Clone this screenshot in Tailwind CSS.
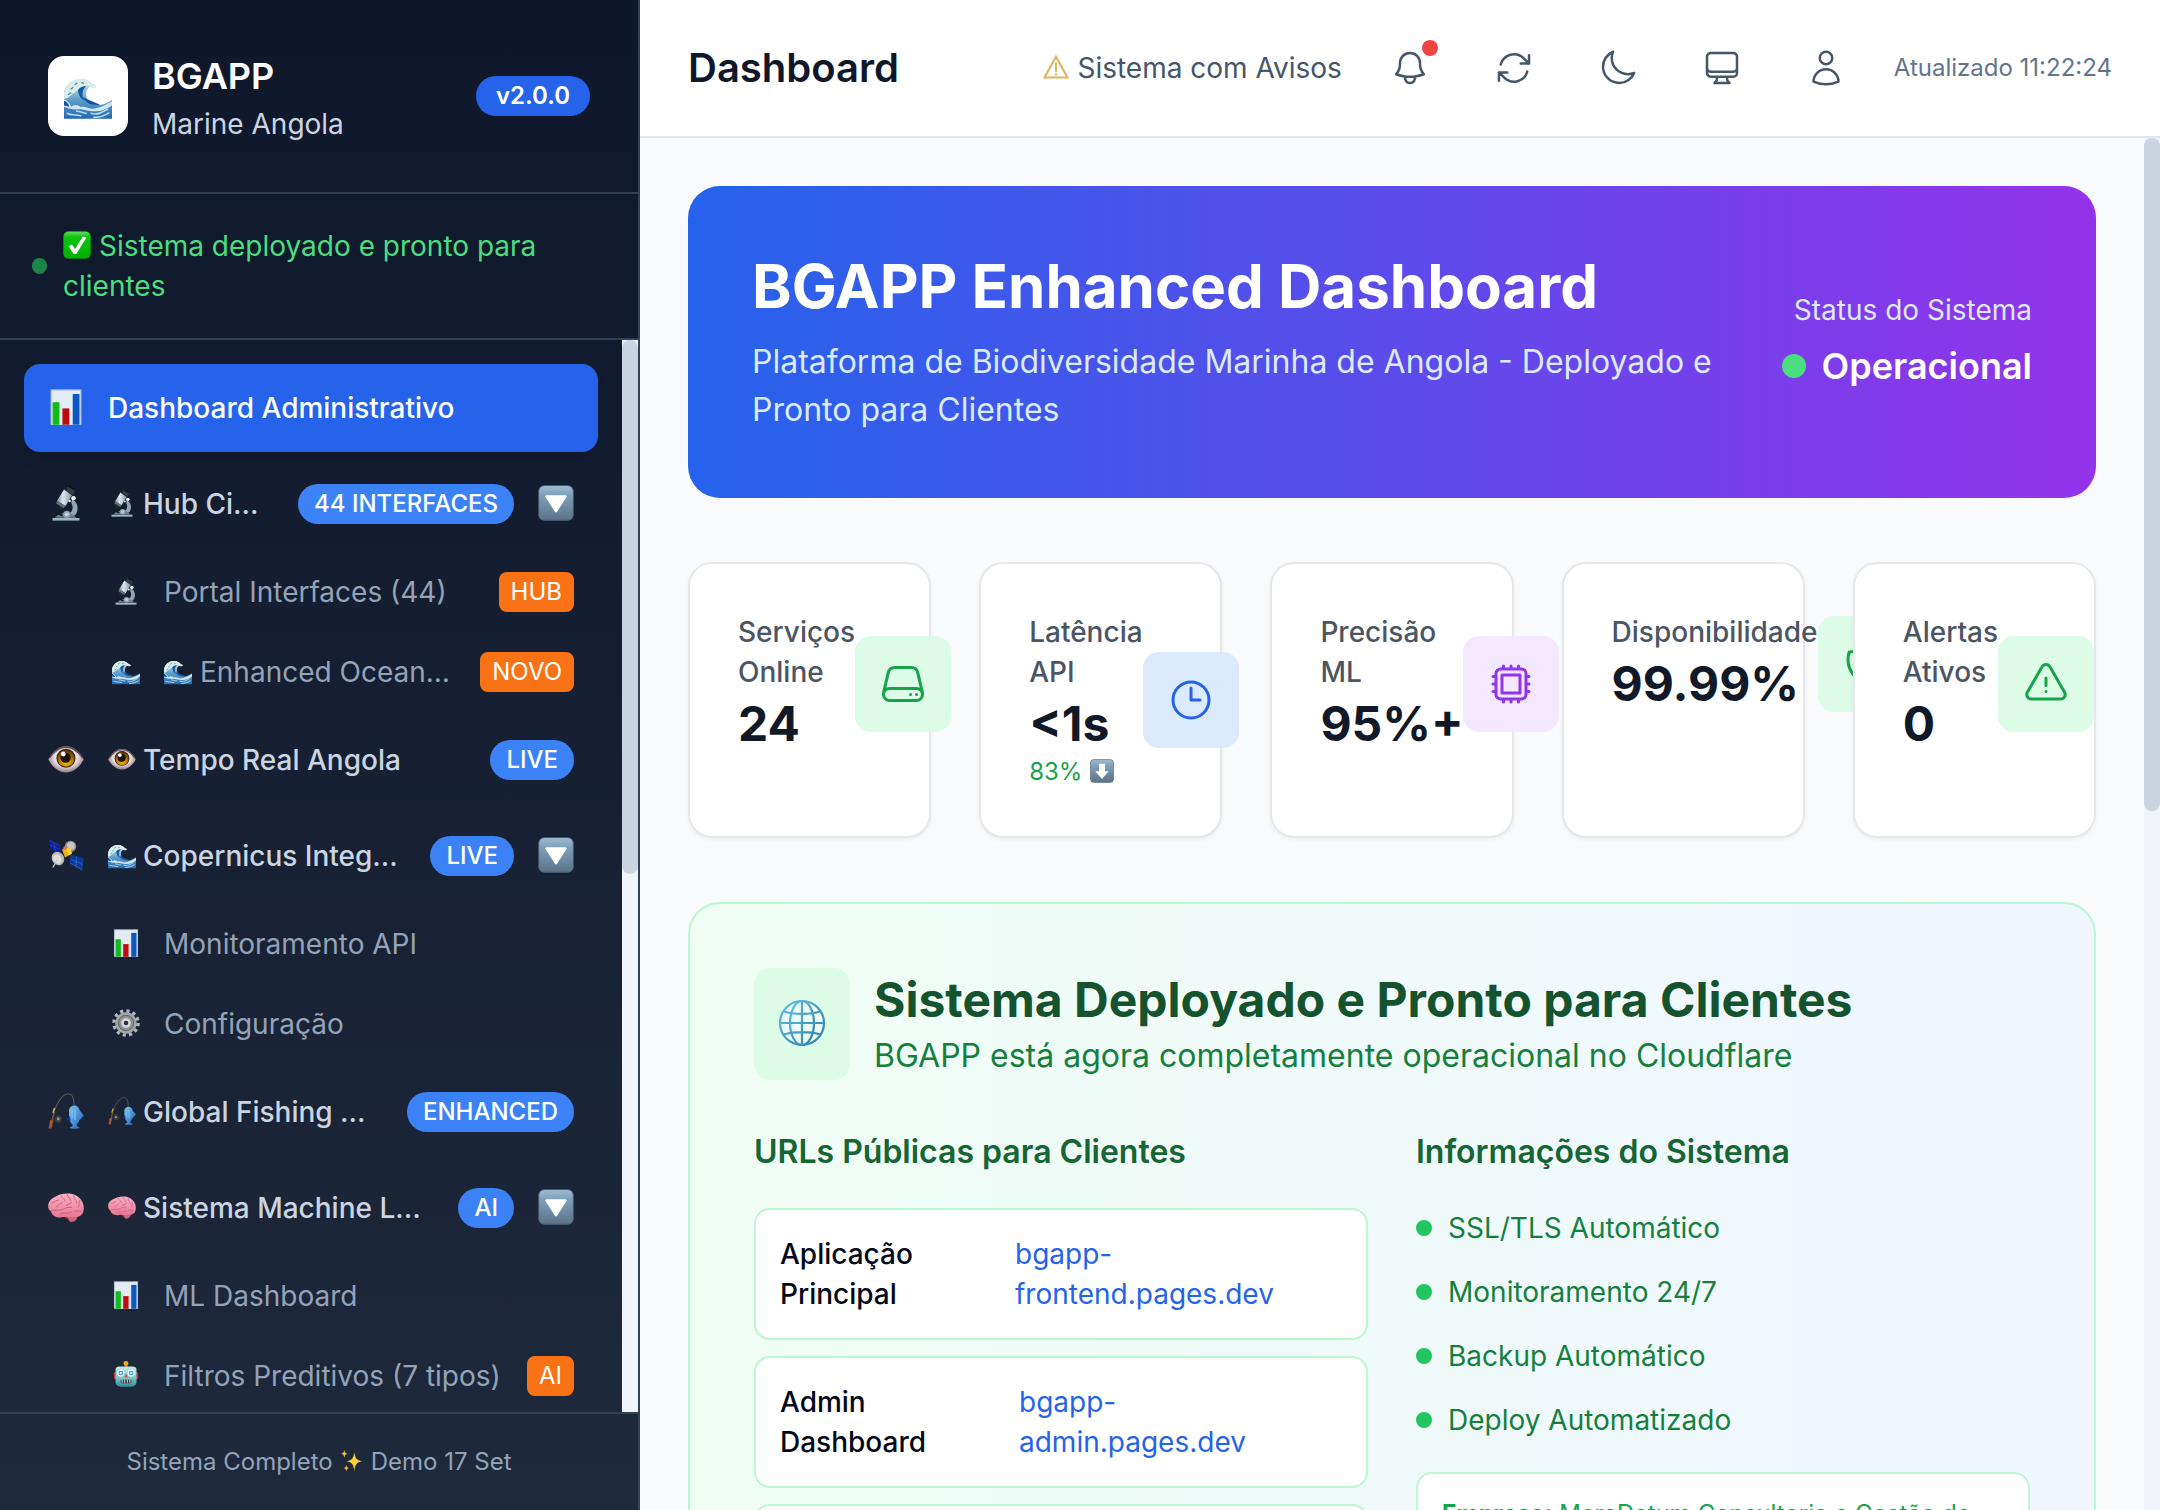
<!DOCTYPE html>
<html lang="pt">
<head>
<meta charset="utf-8">
<title>BGAPP Enhanced Dashboard</title>
<script src="https://cdn.jsdelivr.net/npm/@tailwindcss/browser@4"></script>
</head>
<body class="font-['Inter',sans-serif] antialiased">
<svg width="0" height="0" class="absolute">
  <defs>
    <linearGradient id="gBtn" x1="0" y1="0" x2="0" y2="1"><stop offset="0" stop-color="#9dbbd0"/><stop offset=".25" stop-color="#7fa2bd"/><stop offset="1" stop-color="#5d7488"/></linearGradient>
    <linearGradient id="gCheck" x1="0" y1="0" x2="0" y2="1"><stop offset="0" stop-color="#5be05b"/><stop offset=".2" stop-color="#0fc40f"/><stop offset="1" stop-color="#00ae00"/></linearGradient>
    <linearGradient id="gSteel" x1="0" y1="0" x2="1" y2="0"><stop offset="0" stop-color="#7d93a0"/><stop offset=".4" stop-color="#dbe9f0"/><stop offset="1" stop-color="#7e95a3"/></linearGradient>
    <linearGradient id="gWave" x1="0" y1="0" x2="0" y2="1"><stop offset="0" stop-color="#dff0ec"/><stop offset=".55" stop-color="#5b9bc9"/><stop offset="1" stop-color="#2368b2"/></linearGradient>
    <radialGradient id="gEye" cx=".5" cy=".45" r=".55"><stop offset="0" stop-color="#fff"/><stop offset=".6" stop-color="#e4dbe0"/><stop offset="1" stop-color="#8f7a81"/></radialGradient>
    <radialGradient id="gIris" cx=".5" cy=".8" r=".8"><stop offset="0" stop-color="#f0b400"/><stop offset=".5" stop-color="#b97a06"/><stop offset="1" stop-color="#4b2a08"/></radialGradient>
    <linearGradient id="gBrain" x1="0" y1="0" x2="0" y2="1"><stop offset="0" stop-color="#f9b3c4"/><stop offset="1" stop-color="#e87496"/></linearGradient>
    <linearGradient id="gBot" x1="0" y1="0" x2="0" y2="1"><stop offset="0" stop-color="#bfeeee"/><stop offset=".55" stop-color="#7cc6c9"/><stop offset="1" stop-color="#2d8f95"/></linearGradient>
    <linearGradient id="gFish" x1="0" y1="0" x2="1" y2="1"><stop offset="0" stop-color="#7cc4f5"/><stop offset="1" stop-color="#1b62b8"/></linearGradient>
    <linearGradient id="gGlobe" x1="0" y1="0" x2="1" y2="1"><stop offset="0" stop-color="#63bfe6"/><stop offset="1" stop-color="#2c7fa6"/></linearGradient>

    <symbol id="chart" viewBox="0 0 36 36">
      <path d="M2.5.3h31v35.4h-31z" fill="#a9b6cb"/><path d="M3.6 1.5h28.8v34.2H3.6z" fill="#e3ebf5"/>
      <path d="M4.6 13.2h6.8v22.5H4.6z" fill="#0fbb17"/><path d="M14.4 19.4h6.9v16.3h-6.9z" fill="#bf0a10"/><path d="M24.7 5h6.8v30.7h-6.8z" fill="#0a58c2"/>
    </symbol>
    <symbol id="microscope" viewBox="0 0 36 36">
      <path d="M24 14.5c6.5 2.500 7 11 3.300 15.500l-5.500 2.500-1.500-3.500c4.500-2 5.500-7 3-11z" fill="#8fa6b5"/>
      <path d="M4.500 33h27v2.600h-27z" fill="#9db3c1"/><path d="M7 32.800c3-4 7-4.800 11-4.800s8 1.500 10.500 4.800z" fill="#6b808e"/>
      <circle cx="18.800" cy="29.300" r="3.600" fill="#8fa3b0"/><circle cx="18.800" cy="29.300" r="1.900" fill="#c4d2da"/>
      <path d="m6 25.500 9 4.300-.8 1.700-9.200-4.500z" fill="#14181c"/>
      <path d="m16 4.500 8 5.800-6.500 10.700-8.500-5.200z" fill="url(#gSteel)"/>
      <path d="m9 15.800 8.500 5.200-1.800 2.200-7.400-4.400z" fill="#5d7280"/><path d="m10.500 20 4.200 2.500-1.300 1.900-4-2.300z" fill="#23292e"/>
      <path d="m20 1.500 7 4.200-2.300 4.300-6.700-4.500z" fill="#343c43"/><path d="m21.300.3 5.700 3.500-.8 1.400-5.700-3.500z" fill="#0f1316"/>
      <circle cx="25.500" cy="13.300" r="2.200" fill="#fff"/><circle cx="21.700" cy="16" r="1.200" fill="#f1f5f8"/>
    </symbol>
    <symbol id="wave" viewBox="0 0 36 36">
      <path d="M0 35V14.500C2.200 8.500 7 4.800 13 5c4 .2 6.500 1.700 8.500 4 1.500 0 2.500 1 2.700 2.500-2 .2-3.200 0-4.700-.6-2.800 2.200-3.800 6-2 9.400C20 25 28 27 36 21v14z" fill="url(#gWave)"/>
      <path d="M0 15.500C2.500 8.300 7.500 5 13 5.200c4 .2 6.500 1.700 8.500 4 1.500 0 2.500 1 2.700 2.500-2 .2-3.200 0-4.700-.6-3-1.500-5.500-.6-7.500 1.200-1.300 2-3 1.500-4 3.500-1.500-.4-2 2.200-4 2.200-.5 1.500-2 2-4 2z" fill="#d9ece6"/>
      <path d="M10.500 13.500c1.700-2 3.700-3 6-2.700-3 2.500-3.500 7-1.200 10.700-2.500-1-4.500-4-4.800-8z" fill="#0f5aa8"/>
      <path d="M8 9.500l2-1.500M13 8l2 .5M5 13l2-1.500M3 17l2.500-1.500" stroke="#3b8db5" stroke-width=".9"/>
      <path d="M0 20.500c2.500 1 4.500 3 5.500 5.500 2-1.500 5-1.500 7 .2 4-1 7 2.500 12 .8 4-.8 7-2.500 11.500-5v3c-4 3-8 4.500-12 4.500-6 .2-9-1.500-13-1.500-4 .3-7-.5-11-2z" fill="#cfe6ee"/>
      <path d="M0 21.500c2 .5 3.500 2.500 4 4.500l-4-.8zM14 19c2.500 5 8 6.500 13 5.500" fill="#14549f"/>
      <path d="M2 31c4 2 7 .5 11 2M20 31c5 1.500 9-.8 13-3.300M9 29.500c3-.5 5 1.500 8 1.500M22 34c4 .3 9-1.500 12-3.500" stroke="#b9dcef" stroke-width="1.200" fill="none"/>
    </symbol>
    <symbol id="eye" viewBox="0 0 36 36">
      <path d="M.3 18.500C5.500 9.500 11.500 5.300 18 5.300S30.500 9.500 35.700 18.500C31 27 25 31.500 18 31.500S5 27 .3 18.500z" fill="url(#gEye)"/>
      <path d="M1.500 17C6.500 9.500 12 6 18 6s11.500 3.500 16.500 11" stroke="#5f4a4d" stroke-width="1.300" fill="none"/>
      <circle cx="18" cy="17.300" r="9.500" fill="#33200c"/><circle cx="18" cy="17.300" r="8.500" fill="url(#gIris)"/><circle cx="17.500" cy="16.500" r="5.200" fill="#1d100b"/><circle cx="15.300" cy="13" r="2.400" fill="#fff"/>
    </symbol>
    <symbol id="satellite" viewBox="0 0 36 36">
      <circle cx="22.500" cy="9.500" r="5.800" fill="#8d8d8b"/><circle cx="22.800" cy="9" r="4" fill="#c9c7c2"/>
      <path d="m1 3.200 11 5.300 1 8.500-10.800-5z" fill="#0c1fa0"/><path d="m1 3.200 11 5.300M6 6l1.500 8.300M1.700 7.800l10.800 5" stroke="#3350c8" stroke-width=".6"/>
      <path d="m22.500 17.500 13 3.500-1 12.500-12.500-7z" fill="#0b3a9c"/><path d="m28.500 19.500-.5 10M22.500 22l12.500 5.500M22 26l12.500 7" stroke="#3b70c6" stroke-width=".7"/>
      <path d="m14 12.500 6-3 4 7-7 4z" fill="#e6b012"/><path d="m18 12 4-2 2 6.500-3.500 1.800z" fill="#ffcf33"/><circle cx="17" cy="11" r="1.700" fill="#e36b62"/>
      <ellipse cx="10" cy="21.500" rx="6" ry="7" transform="rotate(-35 10 21.500)" fill="#b9b8b5"/><ellipse cx="9.300" cy="22" rx="3.900" ry="5" transform="rotate(-35 9.300 22)" fill="#dededb"/><path d="m9.300 23-4.500 7.500" stroke="#c7c7c5" stroke-width="1.300"/>
    </symbol>
    <symbol id="gear" viewBox="0 0 36 36">
      <circle cx="18" cy="18" r="15.500" fill="none" stroke="#b3b7ba" stroke-width="4.500" stroke-dasharray="4.100 4.017"/>
      <circle cx="18" cy="18" r="13.800" fill="#a3a7aa"/><circle cx="18" cy="18" r="10.600" fill="#686c70"/><circle cx="18" cy="18" r="9.200" fill="#8d9296"/><circle cx="18" cy="18" r="6.200" fill="#d5d8da"/><circle cx="18" cy="18" r="3" fill="#2a3240"/>
    </symbol>
    <symbol id="fishing" viewBox="0 0 36 36">
      <path d="M4 29C6 14 13 1.500 20 .8c4-.3 6 3.200 6 12" fill="none" stroke="#5e5a55" stroke-width="1.100"/>
      <path d="m5 20 1.500-5" stroke="#e3b64a" stroke-width="1.500"/>
      <path d="M2 27.500 5.800 26 3.500 35.500H.5z" fill="#a9562f"/><path d="m4 28 2.500-9" stroke="#6a5a48" stroke-width="1.500"/>
      <circle cx="10.300" cy="26" r="5" fill="#25272a"/><circle cx="10.300" cy="26" r="3.500" fill="#3d4043"/><circle cx="10.300" cy="26" r="1.400" fill="#94979a"/>
      <path d="M21 17c.5-3 3-4.500 5.500-4.500S31 14 31.500 17l4.300 5.500-4.600 5c-.8 2-2 3.300-2.700 5l3.500 2.500c-2.500 1-8 1-10.500 0l3.500-2.500c-1.500-2-3.500-4.500-4-7.500z" fill="url(#gFish)"/>
      <path d="m18 26.500 4-3.500.5 5z" fill="#1432a8"/><path d="M24 17v9M27 16v11" stroke="#8fd0f8" stroke-width=".9"/>
    </symbol>
    <symbol id="brain" viewBox="0 0 36 36">
      <path d="M16 27.500c2 3 4.500 2.500 5 3.500l-1.500-4z" fill="#6d3a35"/>
      <path d="M19.500 28c2-3.500 8-4 10-1.500 0 3.500-2 6.500-6 6.500-2.500 0-3-2-4-5z" fill="#cf6474"/>
      <path d="M.2 17.500C0 12 4 9 8 7.500 12 4.500 22 3 28 6.500c5 2.500 8.500 8.500 7.700 14-.3 5-4.200 8.300-9.700 7.500-5 1-9-.8-12 .2C9 29.500 4 27 3 22.500 1 21 .2 19.500.2 17.500z" fill="url(#gBrain)"/>
      <path d="M3 22c4-2 8 0 11-1.500 3-1 6-3 10-2M4 14c3-1 4-3 7-3M8 18c3-.5 3-4 6.500-4.500M13 6.500c0 3 4 2.500 4 6M19 5c0 3 4 3 3.500 7M26 6.500c-1.500 3 3.500 4 2.500 8M32 11c-2 1.500.5 5-2 7.500M18 17c1-3 4-1 6-4M12 25c3-2 8 .5 12-2.500M26 22c2 1 4-1 7 .5" fill="none" stroke="#cb5878" stroke-width=".9"/>
    </symbol>
    <symbol id="robot" viewBox="0 0 36 36">
      <path d="M16 5h4v4h-4z" fill="#c6472a"/><circle cx="18" cy="3.300" r="3.200" fill="#f3a81c"/>
      <rect x="2.300" y="14.500" width="31.400" height="9" rx="1.500" fill="#c73631"/>
      <path d="M4.500 11c0-3 2-4 5-4h17c3 0 5 1 5 4v16c0 4-3 6-7 6h-13c-4 0-7-2-7-6z" fill="url(#gBot)"/>
      <circle cx="11.300" cy="15.500" r="4.600" fill="#fff"/><circle cx="24.700" cy="15.500" r="4.600" fill="#fff"/><circle cx="11.300" cy="15.500" r="3" fill="#2a9fd8"/><circle cx="24.700" cy="15.500" r="3" fill="#2a9fd8"/><circle cx="11.300" cy="15.500" r="1.500" fill="#e8fbff"/><circle cx="24.700" cy="15.500" r="1.500" fill="#e8fbff"/>
      <path d="m18 16.500 2.300 4.500h-4.600z" fill="#e2432d"/><rect x="11" y="24" width="14" height="4.500" rx="1.500" fill="#2b3a40"/><path d="M13 24v4M16.300 24v4M19.700 24v4M23 24v4" stroke="#e5f0f1" stroke-width="1.200"/>
    </symbol>
    <symbol id="down" viewBox="0 0 36 36">
      <rect x=".3" y=".3" width="35.400" height="35.400" rx="6" fill="#56697b"/><rect x="1.200" y="1" width="33.600" height="33.600" rx="5.500" fill="url(#gBtn)"/>
      <path d="M8.500 10.300h19c1 0 1.400.8 1 1.600l-9.300 14.800c-.6.900-1.800.9-2.400 0L7.500 11.900c-.4-.8 0-1.600 1-1.600z" fill="#fff"/>
    </symbol>
    <symbol id="arrowdown" viewBox="0 0 36 36">
      <rect x=".3" y=".3" width="35.400" height="35.400" rx="6" fill="#56697b"/><rect x="1.200" y="1" width="33.600" height="33.600" rx="5.500" fill="url(#gBtn)"/>
      <path d="M13.500 7h9v11.500H28L18 30 8 18.500h5.500z" fill="#fff"/>
    </symbol>
    <symbol id="check" viewBox="0 0 36 36">
      <rect x=".3" y=".3" width="35.400" height="35.400" rx="6.500" fill="#0a9a1a"/><rect x="1.200" y="1" width="33.600" height="33.800" rx="6" fill="url(#gCheck)"/>
      <path d="m7.500 19.500 4-2.300 4 6L25.500 7l4.500 1.800-13 20.700h-3.500z" fill="#fff"/>
    </symbol>
    <symbol id="sparkles" viewBox="0 0 36 36">
      <path d="M21.500 5c1.200 9 3.500 12 11.500 13.500-8 1.500-10.300 5-11.500 14.500-1.200-9.500-3.500-13-11.500-14.500C18 17 20.300 14 21.500 5z" fill="#fbd02f"/>
      <path d="M6.500 1c.6 4 1.500 5.200 5 6-3.500.7-4.400 2.300-5 6.500-.6-4.200-1.500-5.800-5-6.500 3.500-.8 4.400-2 5-6zM9.500 23.500c.5 3 1.300 4.500 4 5-2.700.7-3.500 2-4 5.500-.5-3.500-1.300-4.800-4-5.500 2.700-.5 3.500-2 4-5z" fill="#f0b833"/>
    </symbol>
    <symbol id="globe" viewBox="0 0 48 48">
      <circle cx="24" cy="24" r="21.800" fill="#eafaf4"/>
      <g fill="none" stroke="url(#gGlobe)" stroke-width="2.200"><circle cx="24" cy="24" r="22"/><ellipse cx="24" cy="24" rx="12" ry="22"/><path d="M24.010 2 24 46M2 24.010 46 24M6 12.500c9 3.200 27 3.200 36 0M6 35.500c9-3.200 27-3.200 36 0"/></g>
    </symbol>
    <symbol id="warn" viewBox="1 0 26 28">
      <path d="M14 3.800 25.500 24.500h-23z" fill="none" stroke="#e2b45c" stroke-width="2.200"/><path d="M14 9.500v9.500M14 20.300v2.200" stroke="#e2b45c" stroke-width="2"/>
    </symbol>
  </defs>
</svg>

<div class="flex h-[1510px] w-[2160px] overflow-hidden bg-slate-50">
  <!-- Sidebar -->
  <aside class="flex w-[640px] shrink-0 flex-col border-r-2 border-[#334155] bg-linear-to-b/srgb from-[#0f172a] to-[#1e293b]">
    <div class="flex shrink-0 items-center justify-between border-b-2 border-[#334155] p-12">
      <div class="flex items-center gap-6">
        <div class="flex size-20 items-center justify-center rounded-2xl bg-white"><svg class="size-12"><use href="#wave"/></svg></div>
        <div>
          <div class="text-[36px] leading-[56px] font-semibold text-white">BGAPP</div>
          <div class="text-[28px] leading-[40px] text-[#cbd5e1]">Marine Angola</div>
        </div>
      </div>
      <span class="rounded-full bg-[#2563eb] px-5 py-1 text-[24px] leading-[32px] font-semibold text-white">v2.0.0</span>
    </div>
    <div class="flex shrink-0 items-center gap-4 border-b-2 border-[#334155] p-8">
      <span class="h-4 w-[15px] shrink-0 rounded-full bg-[#1b854a]"></span>
      <div class="text-[28px] leading-[40px] text-[#4ade80]">
        <div class="flex items-center gap-2"><svg class="mb-0.5 size-7"><use href="#check"/></svg>Sistema deployado e pronto para</div>
        <div>clientes</div>
      </div>
    </div>
    <div class="flex min-h-0 flex-1 overflow-hidden">
      <nav class="flex w-[622px] shrink-0 flex-col gap-2 p-6 text-[28px] leading-[40px]">
        <a class="flex h-[88px] shrink-0 items-center gap-6 rounded-2xl bg-[#2563eb] px-6 font-medium text-white shadow-lg"><svg class="mb-0.5 size-9"><use href="#chart"/></svg>Dashboard Administrativo</a>

        <a class="flex h-[88px] shrink-0 items-center gap-6 px-6 font-medium text-[#cbd5e1]">
          <svg class="mb-0.5 size-9 shrink-0"><use href="#microscope"/></svg>
          <span class="flex flex-1 items-center gap-[7px] whitespace-nowrap"><svg class="mb-0.5 size-7"><use href="#microscope"/></svg>Hub Ci…</span>
          <span class="rounded-full bg-[#3b82f6] px-4 py-1 text-[24px] leading-[32px] text-white">44 INTERFACES</span>
          <svg class="mb-0.5 size-9 shrink-0"><use href="#down"/></svg>
        </a>
        <a class="ml-16 flex h-[72px] shrink-0 items-center gap-6 px-6 text-[#94a3b8]"><svg class="mb-0.5 size-7 shrink-0"><use href="#microscope"/></svg><span class="flex-1">Portal Interfaces (44)</span><span class="rounded-lg bg-[#f97316] px-3 py-1 text-[24px] leading-[32px] text-white">HUB</span></a>
        <a class="ml-16 flex h-[72px] shrink-0 items-center gap-6 px-6 text-[#94a3b8]"><svg class="mb-0.5 size-7 shrink-0"><use href="#wave"/></svg><span class="flex flex-1 items-center gap-2 whitespace-nowrap"><svg class="mb-0.5 size-7"><use href="#wave"/></svg>Enhanced Ocean…</span><span class="rounded-lg bg-[#f97316] px-3 py-1 text-[24px] leading-[32px] text-white">NOVO</span></a>

        <a class="flex h-[88px] shrink-0 items-center gap-6 px-6 font-medium text-[#cbd5e1]">
          <svg class="mb-0.5 size-9 shrink-0"><use href="#eye"/></svg>
          <span class="flex flex-1 items-center gap-[7px] whitespace-nowrap"><svg class="mb-0.5 size-7"><use href="#eye"/></svg>Tempo Real Angola</span>
          <span class="rounded-full bg-[#3b82f6] px-4 py-1 text-[24px] leading-[32px] text-white">LIVE</span>
        </a>
        <a class="flex h-[88px] shrink-0 items-center gap-6 px-6 font-medium text-[#cbd5e1]">
          <svg class="mb-0.5 size-9 shrink-0"><use href="#satellite"/></svg>
          <span class="flex flex-1 items-center gap-[7px] whitespace-nowrap"><svg class="mb-0.5 size-7"><use href="#wave"/></svg>Copernicus Integ…</span>
          <span class="rounded-full bg-[#3b82f6] px-4 py-1 text-[24px] leading-[32px] text-white">LIVE</span>
          <svg class="mb-0.5 size-9 shrink-0"><use href="#down"/></svg>
        </a>
        <a class="ml-16 flex h-[72px] shrink-0 items-center gap-6 px-6 text-[#94a3b8]"><svg class="mb-0.5 size-7 shrink-0"><use href="#chart"/></svg><span class="flex-1">Monitoramento API</span></a>
        <a class="ml-16 flex h-[72px] shrink-0 items-center gap-6 px-6 text-[#94a3b8]"><svg class="mb-0.5 size-7 shrink-0"><use href="#gear"/></svg><span class="flex-1">Configuração</span></a>

        <a class="flex h-[88px] shrink-0 items-center gap-6 px-6 font-medium text-[#cbd5e1]">
          <svg class="mb-0.5 size-9 shrink-0"><use href="#fishing"/></svg>
          <span class="flex flex-1 items-center gap-[7px] whitespace-nowrap"><svg class="mb-0.5 size-7"><use href="#fishing"/></svg>Global Fishing …</span>
          <span class="rounded-full bg-[#3b82f6] px-4 py-1 text-[24px] leading-[32px] text-white">ENHANCED</span>
        </a>
        <a class="flex h-[88px] shrink-0 items-center gap-6 px-6 font-medium text-[#cbd5e1]">
          <svg class="mb-0.5 size-9 shrink-0"><use href="#brain"/></svg>
          <span class="flex flex-1 items-center gap-[7px] whitespace-nowrap"><svg class="mb-0.5 size-7"><use href="#brain"/></svg>Sistema Machine L…</span>
          <span class="rounded-full bg-[#3b82f6] px-4 py-1 text-[24px] leading-[32px] text-white">AI</span>
          <svg class="mb-0.5 size-9 shrink-0"><use href="#down"/></svg>
        </a>
        <a class="ml-16 flex h-[72px] shrink-0 items-center gap-6 px-6 text-[#94a3b8]"><svg class="mb-0.5 size-7 shrink-0"><use href="#chart"/></svg><span class="flex-1">ML Dashboard</span></a>
        <a class="ml-16 flex h-[72px] shrink-0 items-center gap-6 px-6 text-[#94a3b8]"><svg class="mb-0.5 size-7 shrink-0"><use href="#robot"/></svg><span class="flex-1 whitespace-nowrap">Filtros Preditivos (7 tipos)</span><span class="rounded-lg bg-[#f97316] px-3 py-1 text-[24px] leading-[32px] text-white">AI</span></a>
      </nav>
      <div class="w-4 shrink-0 bg-[#f1f5f9]"><div class="h-[534px] rounded-lg bg-[#cbd5e1]"></div></div>
    </div>
    <div class="flex shrink-0 items-center justify-center border-t-2 border-[#334155] p-8 text-[24px] leading-[32px] text-[#94a3b8]">Sistema Completo<svg class="mx-[7px] mb-0.5 size-6"><use href="#sparkles"/></svg>Demo 17 Set</div>
  </aside>

  <div class="flex min-w-0 flex-1 flex-col">
    <!-- Top bar -->
    <header class="flex h-[138px] shrink-0 items-center justify-between border-b-2 border-[#e2e8f0] bg-white px-12">
      <h1 class="text-[40px] leading-[56px] font-semibold text-[#0f172a]">Dashboard</h1>
      <div class="flex items-center gap-8 text-[#475569]">
        <div class="flex items-center text-[28px] leading-[40px]"><svg class="mr-2 mb-0.5 h-7 w-[26px]"><use href="#warn"/></svg>Sistema com Avisos</div>
        <button class="relative p-4"><svg class="size-10" viewBox="0 0 24 24" fill="none" stroke="currentColor" stroke-width="1.5" stroke-linecap="round" stroke-linejoin="round"><path d="M14.857 17.082a23.848 23.848 0 0 0 5.454-1.310A8.967 8.967 0 0 1 18 9.750V9A6 6 0 0 0 6 9v.750a8.967 8.967 0 0 1-2.312 6.022c1.733.640 3.560 1.085 5.455 1.310m5.714 0a24.255 24.255 0 0 1-5.714 0m5.714 0a3 3 0 1 1-5.714 0"/></svg><span class="absolute top-2 right-2 size-4 rounded-full bg-[#ef4444]"></span></button>
        <button class="p-4"><svg class="size-10" viewBox="0 0 24 24" fill="none" stroke="currentColor" stroke-width="1.5" stroke-linecap="round" stroke-linejoin="round"><path d="M16.023 9.348h4.992v-.001M2.985 19.644v-4.992m0 0h4.992m-4.993 0 3.181 3.183a8.250 8.250 0 0 0 13.803-3.700M4.031 9.865a8.250 8.250 0 0 1 13.803-3.700l3.181 3.182m0-4.991v4.990"/></svg></button>
        <button class="p-4"><svg class="size-10" viewBox="0 0 24 24" fill="none" stroke="currentColor" stroke-width="1.5" stroke-linecap="round" stroke-linejoin="round"><path d="M21.752 15.002A9.720 9.720 0 0 1 18 15.750c-5.385 0-9.750-4.365-9.750-9.750 0-1.330.266-2.597.748-3.752A9.753 9.753 0 0 0 3 11.250C3 16.635 7.365 21 12.750 21a9.753 9.753 0 0 0 9.002-5.998Z"/></svg></button>
        <button class="p-4"><svg class="size-10" viewBox="0 0 24 24" fill="none" stroke="currentColor" stroke-width="1.5" stroke-linecap="round" stroke-linejoin="round"><path d="M9 17.250v1.007a3 3 0 0 1-.879 2.122L7.500 21h9l-.621-.621A3 3 0 0 1 15 18.257V17.250m6-12V15a2.250 2.250 0 0 1-2.250 2.250H5.250A2.250 2.250 0 0 1 3 15V5.250m18 0A2.250 2.250 0 0 0 18.750 3H5.250A2.250 2.250 0 0 0 3 5.250m18 0V12a2.250 2.250 0 0 1-2.250 2.250H5.250A2.250 2.250 0 0 1 3 12V5.250"/></svg></button>
        <button class="p-4"><svg class="size-10" viewBox="0 0 24 24" fill="none" stroke="currentColor" stroke-width="1.5" stroke-linecap="round" stroke-linejoin="round"><path d="M15.750 6a3.750 3.750 0 1 1-7.500 0 3.750 3.750 0 0 1 7.500 0ZM4.501 20.118a7.500 7.500 0 0 1 14.998 0A17.933 17.933 0 0 1 12 21.750c-2.676 0-5.216-.584-7.499-1.632Z"/></svg></button>
        <div class="text-[24px] leading-[32px] text-[#64748b]">Atualizado 11:22:24</div>
      </div>
    </header>

    <div class="flex min-h-0 flex-1 overflow-hidden">
      <main class="flex min-w-0 flex-1 flex-col gap-16 p-12">
        <!-- Hero -->
        <section class="flex h-[312px] shrink-0 items-center justify-between rounded-[32px] bg-linear-to-r/srgb from-[#2563eb] to-[#9333ea] px-16 text-white">
          <div class="w-[980px]">
            <h2 class="text-[60px] leading-[72px] font-bold">BGAPP Enhanced Dashboard</h2>
            <p class="mt-4 text-[32px] leading-[48px] text-[#dbeafe]">Plataforma de Biodiversidade Marinha de Angola - Deployado e<br>Pronto para Clientes</p>
          </div>
          <div class="text-right">
            <div class="text-[28px] leading-[40px] text-[#dbeafe]">Status do Sistema</div>
            <div class="mt-2 flex items-center justify-end gap-4 text-[36px] leading-[56px] font-semibold"><span class="size-6 rounded-full bg-[#4ade80]"></span>Operacional</div>
          </div>
        </section>

        <!-- Metrics -->
        <section class="grid shrink-0 grid-cols-5 gap-12">
          <div class="h-[276px] min-w-0 rounded-3xl border-2 border-[#e5e7eb] bg-white p-12 shadow-[0_2px_4px_rgba(0,0,0,0.05)]">
            <div class="flex w-0 items-center">
              <div><p class="text-[28px] leading-[40px] font-medium text-[#4b5563]">Serviços Online</p><p class="text-[48px] leading-[64px] font-bold text-[#111827]">24</p></div>
              <div class="rounded-2xl bg-[#dcfce7] p-6 text-[#16a34a]"><svg class="size-12" viewBox="0 0 24 24" fill="none" stroke="currentColor" stroke-width="1.5" stroke-linecap="round" stroke-linejoin="round"><path d="M21.750 17.250v-.228a4.500 4.500 0 0 0-.120-1.030l-2.268-9.640a3.375 3.375 0 0 0-3.285-2.602H7.923a3.375 3.375 0 0 0-3.285 2.602l-2.268 9.640a4.500 4.500 0 0 0-.120 1.030v.228m19.500 0a3 3 0 0 1-3 3H5.250a3 3 0 0 1-3-3m19.500 0a3 3 0 0 0-3-3H5.250a3 3 0 0 0-3 3m16.500 0h.008v.008h-.008v-.008Zm-3 0h.008v.008h-.008v-.008Z"/></svg></div>
            </div>
          </div>
          <div class="h-[276px] min-w-0 rounded-3xl border-2 border-[#e5e7eb] bg-white p-12 shadow-[0_2px_4px_rgba(0,0,0,0.05)]">
            <div class="flex w-0 items-center">
              <div><p class="text-[28px] leading-[40px] font-medium text-[#4b5563]">Latência API</p><p class="text-[48px] leading-[64px] font-bold text-[#111827]">&lt;1s</p><p class="flex items-center gap-2 text-[24px] leading-[32px] text-[#16a34a]">83%<svg class="mb-0.5 size-6 shrink-0"><use href="#arrowdown"/></svg></p></div>
              <div class="rounded-2xl bg-[#dbeafe] p-6 text-[#2563eb]"><svg class="size-12" viewBox="0 0 24 24" fill="none" stroke="currentColor" stroke-width="1.5" stroke-linecap="round" stroke-linejoin="round"><path d="M12 6v6h4.500m4.500 0a9 9 0 1 1-18 0 9 9 0 0 1 18 0Z"/></svg></div>
            </div>
          </div>
          <div class="h-[276px] min-w-0 rounded-3xl border-2 border-[#e5e7eb] bg-white p-12 shadow-[0_2px_4px_rgba(0,0,0,0.05)]">
            <div class="flex w-0 items-center">
              <div><p class="text-[28px] leading-[40px] font-medium text-[#4b5563]">Precisão ML</p><p class="text-[48px] leading-[64px] font-bold whitespace-nowrap text-[#111827]">95%+</p></div>
              <div class="-ml-px rounded-2xl bg-[#f3e8ff] p-6 text-[#9333ea]"><svg class="size-12" viewBox="0 0 24 24" fill="none" stroke="currentColor" stroke-width="1.5" stroke-linecap="round" stroke-linejoin="round"><path d="M8.250 3v1.500M4.500 8.250H3m18 0h-1.500M4.500 12H3m18 0h-1.500m-15 3.750H3m18 0h-1.500M8.250 19.500V21M12 3v1.500m0 15V21m3.750-18v1.500m0 15V21m-9-1.500h10.500a2.250 2.250 0 0 0 2.250-2.250V6.750a2.250 2.250 0 0 0-2.250-2.250H6.750A2.250 2.250 0 0 0 4.500 6.750v10.500a2.250 2.250 0 0 0 2.250 2.250Zm.750-12h9v9h-9v-9Z"/></svg></div>
            </div>
          </div>
          <div class="h-[276px] min-w-0 rounded-3xl border-2 border-[#e5e7eb] bg-white p-12 shadow-[0_2px_4px_rgba(0,0,0,0.05)]">
            <div class="flex w-0 items-center">
              <div><p class="text-[28px] leading-[40px] font-medium text-[#4b5563]">Disponibilidade</p><p class="text-[48px] leading-[64px] font-bold text-[#111827]">99.99%</p></div>
              <div class="rounded-2xl bg-[#dcfce7] p-6 text-[#16a34a]"><svg class="size-12" viewBox="0 0 24 24" fill="none" stroke="currentColor" stroke-width="1.5" stroke-linecap="round" stroke-linejoin="round"><path d="M9 12.750 11.250 15 15 9.750m-3-7.036A11.959 11.959 0 0 1 3.598 6 11.990 11.990 0 0 0 3 9.749c0 5.592 3.824 10.290 9 11.623 5.176-1.332 9-6.030 9-11.622 0-1.310-.210-2.571-.598-3.751h-.152c-3.196 0-6.100-1.248-8.250-3.285Z"/></svg></div>
            </div>
          </div>
          <div class="h-[276px] min-w-0 rounded-3xl border-2 border-[#e5e7eb] bg-white p-12 shadow-[0_2px_4px_rgba(0,0,0,0.05)]">
            <div class="flex w-0 items-center">
              <div><p class="text-[28px] leading-[40px] font-medium text-[#4b5563]">Alertas Ativos</p><p class="text-[48px] leading-[64px] font-bold text-[#111827]">0</p></div>
              <div class="rounded-2xl bg-[#dcfce7] p-6 text-[#16a34a]"><svg class="size-12" viewBox="0 0 24 24" fill="none" stroke="currentColor" stroke-width="1.5" stroke-linecap="round" stroke-linejoin="round"><path d="M12 9v3.750m-9.303 3.376c-.866 1.500.217 3.374 1.948 3.374h14.710c1.730 0 2.813-1.874 1.948-3.374L13.949 3.378c-.866-1.500-3.032-1.500-3.898 0L2.697 16.126ZM12 15.750h.007v.008H12v-.008Z"/></svg></div>
            </div>
          </div>
        </section>

        <!-- Deployment -->
        <section class="h-[946px] shrink-0 rounded-[32px] border-2 border-[#bbf7d0] bg-linear-to-r/srgb from-[#f0fdf4] to-[#eff6ff] p-16">
          <div class="flex items-center gap-6">
            <div class="rounded-2xl bg-[#dcfce7] p-6"><div class="flex h-16 w-12 items-center"><svg class="mb-0.5 size-12"><use href="#globe"/></svg></div></div>
            <div>
              <h3 class="text-[48px] leading-[64px] font-bold text-[#14532d]">Sistema Deployado e Pronto para Clientes</h3>
              <p class="text-[32px] leading-[48px] text-[#15803d]">BGAPP está agora completamente operacional no Cloudflare</p>
            </div>
          </div>
          <div class="mt-12 grid grid-cols-2 gap-12">
            <div>
              <h4 class="text-[32px] leading-[48px] font-semibold text-[#166534]">URLs Públicas para Clientes</h4>
              <div class="mt-8 flex flex-col gap-4 text-[28px] leading-[40px]">
                <div class="flex items-center justify-between rounded-2xl border-2 border-[#bbf7d0] bg-white p-6"><span class="font-medium text-[#020817]">Aplicação<br>Principal</span><a class="w-[327px] text-[#2563eb]">bgapp-<br>frontend.pages.dev</a></div>
                <div class="flex items-center justify-between rounded-2xl border-2 border-[#bbf7d0] bg-white p-6"><span class="font-medium text-[#020817]">Admin<br>Dashboard</span><a class="w-[323px] text-[#2563eb]">bgapp-<br>admin.pages.dev</a></div>
                <div class="h-[132px] rounded-2xl border-2 border-[#bbf7d0] bg-white"></div>
              </div>
            </div>
            <div>
              <h4 class="text-[32px] leading-[48px] font-semibold text-[#166534]">Informações do Sistema</h4>
              <ul class="mt-8 flex flex-col gap-6 text-[28px] leading-[40px] text-[#15803d]">
                <li class="flex items-center gap-4"><span class="size-4 rounded-full bg-[#22c55e]"></span>SSL/TLS Automático</li>
                <li class="flex items-center gap-4"><span class="size-4 rounded-full bg-[#22c55e]"></span>Monitoramento 24/7</li>
                <li class="flex items-center gap-4"><span class="size-4 rounded-full bg-[#22c55e]"></span>Backup Automático</li>
                <li class="flex items-center gap-4"><span class="size-4 rounded-full bg-[#22c55e]"></span>Deploy Automatizado</li>
              </ul>
              <div class="mt-8 h-[132px] rounded-2xl border-2 border-[#bbf7d0] bg-white p-6 text-[24px] leading-[32px] whitespace-nowrap text-[#16a34a]"><b class="font-bold">Empresa:</b> MareDatum Consultoria e Gestão de</div>
            </div>
          </div>
        </section>
      </main>
      <div class="w-4 shrink-0 bg-[#f1f5f9]"><div class="h-[673px] rounded-lg bg-[#cbd5e1]"></div></div>
    </div>
  </div>
</div>
</body>
</html>
